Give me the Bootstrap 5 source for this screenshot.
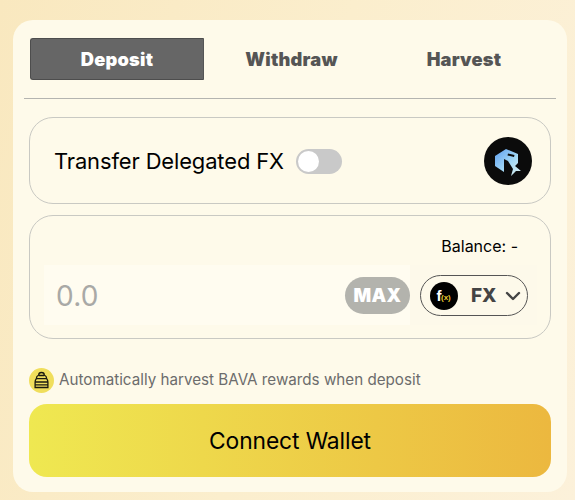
<!DOCTYPE html>
<html lang="en"><head><meta charset="utf-8"><title>Deposit</title>
<link rel="stylesheet" href="https://cdn.jsdelivr.net/npm/bootstrap@5.3.0/dist/css/bootstrap.min.css">
<style>
html,body{height:500px;overflow:hidden}
body{background:linear-gradient(105deg,#f9e8bf 0%,#fbeecd 50%,#fcf1da 100%);font-family:Inter,"Liberation Sans",sans-serif;color:#000}
.shell{width:554px;height:472px;margin:20px 0 0 13px;background:#fefaea;border-radius:20px;padding:18px 11px 0}
.tabbar{margin:0 0 0 6px;height:42px}
.tab-item{width:170px;height:42px;font-size:18.3px;font-weight:900;color:#555;border:0;background:none;padding:2px 0 0;letter-spacing:.2px}
.tab-on{background:#666;color:#fff;border:1px solid #4d4d4d;border-right-color:#555;border-radius:3px 0 0 3px;width:174px}
.tab-mid{width:175px}
.rule{height:1px;background:#b4b4b0;margin:18px 0 18px}
.panel{margin:0 5px;border:1px solid #c9c9c3;border-radius:24px;width:522px}
.panel-a{height:87px;padding:0 18px 0 24px;margin-bottom:11px}
.panel-b{height:124px;padding:0 13px 0 14px;margin-bottom:29px}
.lead-group{padding-top:2px}
.lbl{font-size:21.9px;line-height:1;letter-spacing:-.1px}
.tog{width:46px;height:25px;border-radius:13px;background:#c9c9c9;margin-left:12px;padding:2px}
.knob{width:21px;height:21px;background:#fff;border-radius:50%;display:block}
.coin{width:48px;height:48px}
.bal{font-size:16px;line-height:20px;text-align:right;padding:20px 19px 0 0;height:49px}
.inwrap{background:#fffcf0;height:60px;padding:0 10px}
.inwrap-l{width:367px;padding-left:12px;padding-right:0}
.amt{font-size:28px;color:#a9a9a6;letter-spacing:.2px;position:relative;top:1px}
.maxb{width:65px;height:37px;border-radius:19px;background:#b3b3ad;color:#fff;font-weight:900;font-size:18.500px;border:0;padding:2px 0 0;letter-spacing:.3px}
.sel{width:109px;height:41px;border:1px solid #555;border-radius:21px;background:transparent;padding:1px 0 0 9px;color:#444;font-weight:800;font-size:19px}
.inwrap-r{width:127px;padding:0 9px 0 10px;background:#fdf9ea}
.fxc{width:28px;height:28px;flex:none}
.fxname{margin-left:13px;padding-top:2px}
.note{font-size:15.2px;color:#6c6c6c;height:24px;margin:0 5px 12px}
.note svg{width:25px;height:25px;flex:none;margin-right:5px}
.cta{width:522px;height:73px;margin:0 5px;border:0;border-radius:18px;background:linear-gradient(90deg,#efe851 0%,#ecb83f 100%);font-size:22.8px;color:#000;letter-spacing:-.1px;padding:2px 0 0}
</style></head><body>
<div class="shell">
 <div class="tabbar d-flex">
  <button class="tab-item tab-on">Deposit</button>
  <button class="tab-item tab-mid">Withdraw</button>
  <button class="tab-item">Harvest</button>
 </div>
 <div class="rule"></div>
 <div class="panel panel-a d-flex align-items-center justify-content-between">
  <div class="lead-group d-flex align-items-center"><span class="lbl">Transfer Delegated FX</span><span class="tog"><span class="knob"></span></span></div>
  <svg class="coin" viewBox="0 0 48 48" aria-label="logo"><circle cx="24" cy="24" r="24" fill="#0b0b0b"/><defs><linearGradient id="g" x1="0" y1="0" x2="1" y2="1"><stop offset="0" stop-color="#5f9ff0"/><stop offset=".55" stop-color="#a3d8f5"/><stop offset="1" stop-color="#e4f3ee"/></linearGradient></defs><path fill="url(#g)" fill-rule="evenodd" d="M11 19 22 12 34 17V26L31 29 37 34 32 34 27 39 29 32 24 24 20 22V35L11 29ZM24 16.500 23.500 18.500 30 20 30.500 18Z"/></svg>
 </div>
 <div class="panel panel-b">
  <div class="bal">Balance: -</div>
  <div class="d-flex">
   <div class="inwrap inwrap-l d-flex align-items-center justify-content-between"><span class="amt">0.0</span><button class="maxb">MAX</button></div>
   <div class="inwrap inwrap-r d-flex align-items-center">
    <button class="sel d-flex align-items-center"><svg class="fxc" viewBox="0 0 28 28"><circle cx="14" cy="14" r="14" fill="#000"/><text x="6.500" y="19" font-size="15" fill="#fff" font-family="Liberation Sans, sans-serif">f</text><text x="11" y="18" font-size="8" fill="#e8c92f" font-family="Liberation Sans, sans-serif">(x)</text></svg><span class="fxname">FX</span><svg class="ms-2" width="16" height="10" viewBox="0 0 16 10"><path d="M2 2l6 6 6-6" fill="none" stroke="#444" stroke-width="2.4" stroke-linecap="round" stroke-linejoin="round"/></svg></button>
   </div>
  </div>
 </div>
 <div class="note d-flex align-items-center">
  <svg viewBox="0 0 25 25"><circle cx="12.500" cy="12.500" r="12.500" fill="#f0de5c"/><path d="M12.500 4.500c-1.800 0-2.800 1.300-2.800 2.500-1.500.7-2.400 2-2.400 3.700-1 1-1.200 2.300-1.200 3.300v5.500h12.800V14c0-1-.2-2.300-1.200-3.300 0-1.700-.9-3-2.400-3.700 0-1.200-1-2.500-2.800-2.500zM7.300 10.700h10.400M6 14h13M6 16.800h13M9.700 7.500h5.600" fill="none" stroke="#1a1a10" stroke-width="1.300"/></svg>
  <span>Automatically harvest BAVA rewards when deposit</span>
 </div>
 <button class="cta d-block">Connect Wallet</button>
</div>
<script src="https://cdn.jsdelivr.net/npm/bootstrap@5.3.0/dist/js/bootstrap.bundle.min.js"></script>
</body></html>
